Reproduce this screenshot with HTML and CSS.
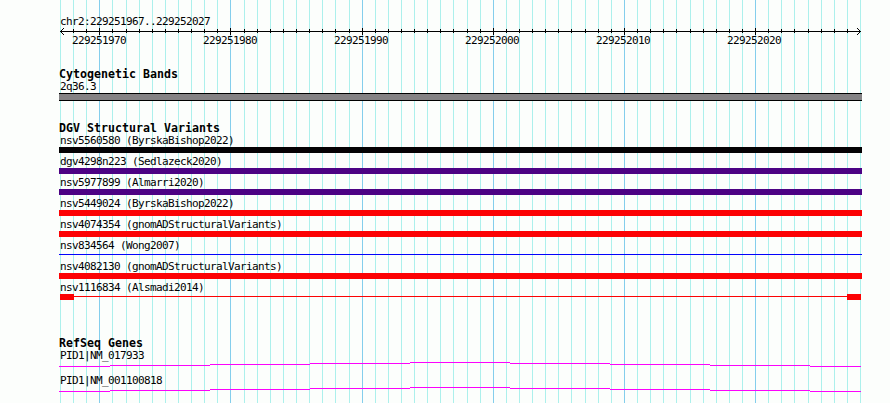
FILE: index.html
```
<!DOCTYPE html>
<html lang="en">
<head>
<meta charset="utf-8">
<title>chr2:229251967..229252027</title>
<link rel="stylesheet" href="styles.css">
</head>
<body>
<main class="browser">
  <svg class="grid" width="803" height="403" aria-hidden="true"><path id="minor" class="minor"/><path id="major" class="major"/></svg>
  <header class="ruler">
    <div class="label">chr2:229251967..229252027</div>
    <svg class="axis" width="803" height="7"><path d="M1 3h801v1h-801z"/><path id="ticks"/><path d="M2 2h1v1h-1zM3 1h1v1h-1zM4 0h1v1h-1zM2 4h1v1h-1zM3 5h1v1h-1zM4 6h1v1h-1zM800 2h1v1h-1zM799 1h1v1h-1zM798 0h1v1h-1zM800 4h1v1h-1zM799 5h1v1h-1zM798 6h1v1h-1z"/></svg>
    <div class="positions"><span>229251970</span><span>229251980</span><span>229251990</span><span>229252000</span><span>229252010</span><span>229252020</span></div>
  </header>
  <section class="cytobands">
    <h2>Cytogenetic Bands</h2>
    <div class="label">2q36.3</div>
    <div class="band"></div>
  </section>
  <section class="variants">
    <h2>DGV Structural Variants</h2>
    <div class="row"><div class="label">nsv5560580 (ByrskaBishop2022)</div><div class="bar black"></div></div>
    <div class="row"><div class="label">dgv4298n223 (Sedlazeck2020)</div><div class="bar indigo"></div></div>
    <div class="row"><div class="label">nsv5977899 (Almarri2020)</div><div class="bar indigo"></div></div>
    <div class="row"><div class="label">nsv5449024 (ByrskaBishop2022)</div><div class="bar red"></div></div>
    <div class="row"><div class="label">nsv4074354 (gnomADStructuralVariants)</div><div class="bar red"></div></div>
    <div class="row"><div class="label">nsv834564 (Wong2007)</div><div class="thin"></div></div>
    <div class="row"><div class="label">nsv4082130 (gnomADStructuralVariants)</div><div class="bar red"></div></div>
    <div class="row"><div class="label">nsv1116834 (Alsmadi2014)</div><div class="linked"><i class="box"></i><i class="link"></i><i class="box"></i></div></div>
  </section>
  <section class="genes">
    <h2>RefSeq Genes</h2>
    <div class="gene"><div class="label">PID1|NM_017933</div><svg class="intron" width="803" height="5"><path d="M0 4h51v1h-51zM51 3h100v1h-100zM151 2h100v1h-100zM251 1h100v1h-100zM351 0h100v1h-100zM451 1h100v1h-100zM551 2h100v1h-100zM651 3h100v1h-100zM751 4h51v1h-51z"/></svg></div>
    <div class="gene"><div class="label">PID1|NM_001100818</div><svg class="intron" width="803" height="5"><path d="M0 4h51v1h-51zM51 3h100v1h-100zM151 2h100v1h-100zM251 1h100v1h-100zM351 0h100v1h-100zM451 1h100v1h-100zM551 2h100v1h-100zM651 3h100v1h-100zM751 4h51v1h-51z"/></svg></div>
  </section>
</main>
<script src="grid.js"></script>
</body>
</html>
```
FILE: styles.css
```
* { box-sizing: border-box; }
body {
  margin: 0;
  background: #fcfefc;
  color: #000;
  font: 11px/13px "DejaVu Sans Mono", monospace;
  overflow: hidden;
}
svg { display: block; shape-rendering: crispEdges; }
.browser {
  position: relative;
  width: 890px;
  height: 403px;
  padding: 15px 28px 0 59px;
  overflow: hidden;
}
.grid { position: absolute; left: 59px; top: 0; z-index: -1; }
.minor { fill: #acf0ec; }
.major { fill: #84ceec; }
.label {
  height: 13px;
  padding-left: 1px;
  letter-spacing: -0.623px;
  white-space: pre;
}
h2 {
  margin: 0;
  height: 12px;
  font-size: 11.6px;
  line-height: 13px;
  font-weight: bold;
  letter-spacing: 0.016px;
  white-space: pre;
}
.axis { fill: #000; }
.positions {
  display: flex;
  justify-content: space-between;
  width: 709px;
  margin: -1px 0 0 13px;
  letter-spacing: -0.623px;
}
.cytobands { margin-top: 21px; }
.band {
  height: 8px;
  border: solid #000;
  border-width: 1px 0;
  background: #848284;
}
.variants { margin-top: 21px; }
.row { height: 21px; }
.bar { height: 6px; }
.black { background: #040204; }
.indigo { background: #4c0284; }
.red { background: #fc0204; }
.thin { height: 1px; margin-top: 2px; background: #0402fc; }
.linked { display: flex; padding: 0 1px; }
.box { width: 14px; height: 6px; background: #fc0204; }
.link { flex: 1; height: 1px; margin-top: 2px; background: #fc0204; }
.genes { margin-top: 35px; }
.gene { height: 25px; }
.intron { fill: #fc02fc; }
```
FILE: grid.js
```
// One guide per base; every tenth base is emphasised.
const BASES = 61;
const SPAN = 800;
let minor = "", major = "", ticks = "";
for (let i = 0; i <= BASES; i++) {
  const x = 1 + Math.round(i * SPAN / BASES);
  const isMajor = i % 10 === 3;
  const guide = `M${x} 0h1v403h-1z`;
  if (isMajor) major += guide; else minor += guide;
  if (i > 0 && i < BASES) ticks += isMajor ? `M${x} 0h1v7h-1z` : `M${x} 1h1v4h-1z`;
}
document.getElementById("minor").setAttribute("d", minor);
document.getElementById("major").setAttribute("d", major);
document.getElementById("ticks").setAttribute("d", ticks);
```
